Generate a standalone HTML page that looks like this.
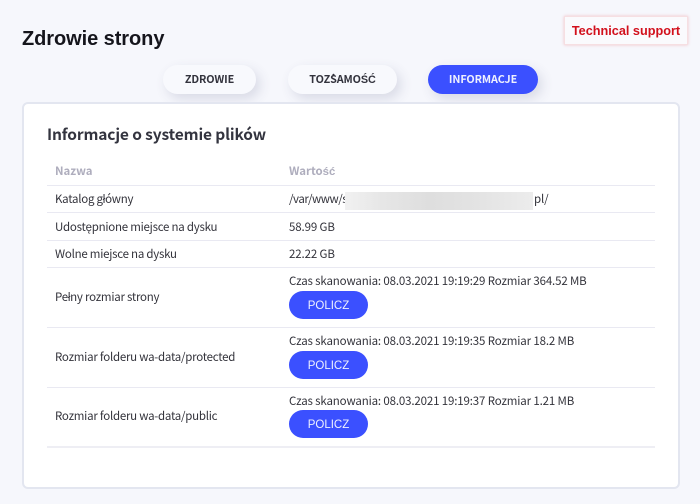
<!DOCTYPE html>
<html lang="pl"><head><meta charset="utf-8"><title>Zdrowie strony</title>
<style>
*{box-sizing:border-box}
html,body{margin:0;padding:0}
body{width:700px;height:504px;background:#f6f7fc;position:relative;overflow:hidden;font-family:"Noto Sans CJK JP","Liberation Sans",sans-serif;color:#3a3a44}
.a{position:absolute;white-space:nowrap}
.f{font-family:"Liberation Sans",sans-serif}
h1{position:absolute;margin:0;left:22px;top:25px;font:700 20px/28px "Liberation Sans",sans-serif;letter-spacing:-.07px;color:#15151c;white-space:nowrap}
.sup{position:absolute;left:564px;top:16px;width:124px;height:29px;background:#fafafd;border:1px solid #f6dfe2;box-shadow:0 0 3px #f0c4c9;color:#d2101c;font:700 12.7px/28px "Liberation Sans",sans-serif;text-align:center;white-space:nowrap}
.tab{position:absolute;top:65px;height:29px;border-radius:15px;background:#f8f9fd;box-shadow:4px 5px 12px rgba(60,70,110,.16);font-weight:700;font-size:10.8px;letter-spacing:-.1px;line-height:29px;text-align:center;color:#33333d;white-space:nowrap}
.tab.on{background:#3b50ff;color:#eef0ff}
.card{position:absolute;left:22px;top:102px;width:658px;height:387px;background:#fff;border:2px solid #e3e6f0;border-radius:6px}
h2{position:absolute;margin:0;left:47px;top:122px;font-weight:700;font-size:15.5px;letter-spacing:-.13px;line-height:24px;color:#33343f;white-space:nowrap}
.th{font-weight:700;font-size:11.4px;line-height:18px;color:#aeadbd}
.l{position:absolute;left:47px;width:608px;height:1px;background:#e9e9f2}
.t{font-size:11.5px;letter-spacing:-.25px;line-height:18px;color:#33333b}
.v{letter-spacing:-.13px}
.b{position:absolute;left:289px;width:79px;height:28px;border-radius:14px;background:#3b50ff;color:#eef0ff;font:11.5px/30px "Liberation Sans",sans-serif;text-align:center}
.blur{position:absolute;left:345px;top:192px;width:188px;height:18px;background:linear-gradient(90deg,#f1f1f1 0,#e6e6e6 20%,#dedede 45%,#e3e3e3 70%,#ececec 100%)}
</style></head><body>
<h1>Zdrowie strony</h1>
<div class="sup">Technical support</div>
<div class="tab" style="left:163px;width:93px">ZDROWIE</div>
<div class="tab" style="left:288px;width:109px">TOŻSAMO<span class="f">ŚĆ</span></div>
<div class="tab on" style="left:428px;width:110px">INFORMACJE</div>
<div class="card"></div>
<h2>Informacje o systemie plików</h2>
<div class="a th" style="left:55px;top:162px">Nazwa</div>
<div class="a th" style="left:289px;top:162px">Warto<span class="f">ść</span></div>
<div class="l" style="top:185px"></div>
<div class="a t" style="left:55px;top:190px">Katalog główny</div>
<div class="a t v" style="left:289px;top:190px;letter-spacing:-.45px">/var/www/s</div>
<div class="blur"></div>
<div class="a t v" style="left:534px;top:190px">pl/</div>
<div class="l" style="top:212px"></div>
<div class="a t" style="left:55px;top:218px">Udostępnione miejsce na dysku</div>
<div class="a t v" style="left:289px;top:218px">58.99 GB</div>
<div class="l" style="top:240px"></div>
<div class="a t" style="left:55px;top:245px">Wolne miejsce na dysku</div>
<div class="a t v" style="left:289px;top:245px">22.22 GB</div>
<div class="l" style="top:267px"></div>
<div class="a t" style="left:55px;top:288px">Pełny rozmiar strony</div>
<div class="a t v" style="left:289px;top:272px;letter-spacing:-.15px">Czas skanowania: 08.03.2021 19:19:29 Rozmiar 364.52 MB</div>
<div class="b" style="top:291px">POLICZ</div>
<div class="l" style="top:327px"></div>
<div class="a t" style="left:55px;top:348px">Rozmiar folderu wa-data/protected</div>
<div class="a t v" style="left:289px;top:332px;letter-spacing:-.15px">Czas skanowania: 08.03.2021 19:19:35 Rozmiar 18.2 MB</div>
<div class="b" style="top:351px">POLICZ</div>
<div class="l" style="top:387px"></div>
<div class="a t" style="left:55px;top:407px">Rozmiar folderu wa-data/public</div>
<div class="a t v" style="left:289px;top:392px;letter-spacing:-.15px">Czas skanowania: 08.03.2021 19:19:37 Rozmiar 1.21 MB</div>
<div class="b" style="top:410px">POLICZ</div>
<div class="l" style="top:446px;height:2px;background:#eeeef4"></div>
</body></html>
